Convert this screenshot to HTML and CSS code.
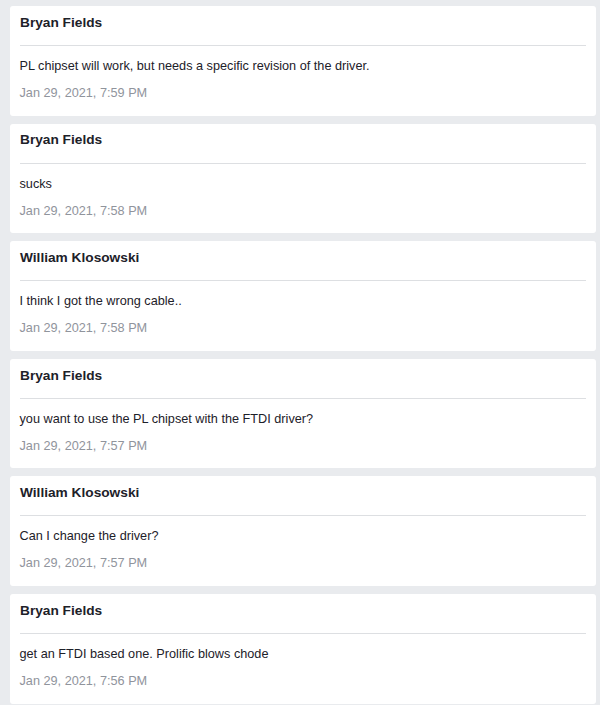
FILE: index.html
```html
<!DOCTYPE html>
<html>
<head>
<meta charset="utf-8">
<link rel="stylesheet" href="styles.css">
</head>
<body>
<div class="list">
  <div class="card">
    <div class="author">Bryan Fields</div>
    <div class="text">PL chipset will work, but needs a specific revision of the driver.</div>
    <div class="date">Jan 29, 2021, 7:59 PM</div>
  </div>
  <div class="card">
    <div class="author">Bryan Fields</div>
    <div class="text">sucks</div>
    <div class="date">Jan 29, 2021, 7:58 PM</div>
  </div>
  <div class="card">
    <div class="author">William Klosowski</div>
    <div class="text">I think I got the wrong cable..</div>
    <div class="date">Jan 29, 2021, 7:58 PM</div>
  </div>
  <div class="card">
    <div class="author">Bryan Fields</div>
    <div class="text">you want to use the PL chipset with the FTDI driver?</div>
    <div class="date">Jan 29, 2021, 7:57 PM</div>
  </div>
  <div class="card">
    <div class="author">William Klosowski</div>
    <div class="text">Can I change the driver?</div>
    <div class="date">Jan 29, 2021, 7:57 PM</div>
  </div>
  <div class="card">
    <div class="author">Bryan Fields</div>
    <div class="text">get an FTDI based one. Prolific blows chode</div>
    <div class="date">Jan 29, 2021, 7:56 PM</div>
  </div>
</div>
</body>
</html>
```
FILE: styles.css
```css
html, body {
  margin: 0;
  padding: 0;
  background: #e9ebee;
}
body {
  font-family: "Liberation Sans", Arial, sans-serif;
  color: #1d2129;
}
.list {
  display: flex;
  flex-direction: column;
  gap: 8px;
  padding: 6px 4px 0 10px;
}
.card {
  background: #ffffff;
  border-radius: 3px;
  padding: 0 10px 0 9.5px;
  height: 109.6px;
  box-sizing: border-box;
}
.author {
  font-weight: bold;
  font-size: 13.7px;
  line-height: 18px;
  padding: 7.8px 0 13.2px;
  border-bottom: 1px solid #dddfe2;
  margin-left: 0.5px;
}
.text {
  font-size: 12.7px;
  line-height: 16px;
  padding-top: 12px;
}
.date {
  font-size: 12.7px;
  line-height: 16px;
  color: #90949c;
  padding-top: 11px;
}
```
